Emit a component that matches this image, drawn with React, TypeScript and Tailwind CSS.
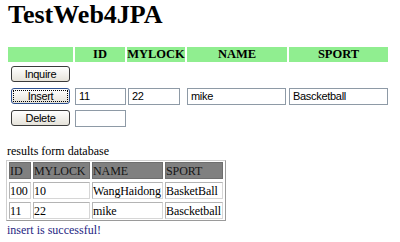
import React from 'react';

const headers = ['', 'ID', 'MYLOCK', 'NAME', 'SPORT'];

const results = [
  ['ID', 'MYLOCK', 'NAME', 'SPORT'],
  ['100', '10', 'WangHaidong', 'BasketBall'],
  ['11', '22', 'mike', 'Bascketball'],
];

function Button({ label, focused }: { label: string; focused?: boolean }) {
  return (
    <button
      type="button"
      className={`mx-[3px] h-[16px] w-[59px] rounded-[3px] border bg-gradient-to-b from-white to-[#e6e3da] font-['Liberation_Sans',Arial,sans-serif] text-[11px] leading-none text-black tracking-[-0.3px] ${
        focused ? 'border-[#2c4f8f] p-[1px]' : 'border-[#3a3a3a]'
      }`}
    >
      {focused ? (
        <span className="flex h-full w-full items-center justify-center border border-dotted border-black">{label}</span>
      ) : (
        label
      )}
    </button>
  );
}

function Field({ value, className }: { value: string; className: string }) {
  return (
    <input
      type="text"
      readOnly
      value={value}
      className={`h-[17px] border border-[#8e9aa6] bg-white px-[3px] font-['Liberation_Sans',Arial,sans-serif] text-[11px] text-black tracking-[-0.3px] outline-none ${className}`}
    />
  );
}

export default function App() {
  return (
    <div className="h-[242px] w-[400px] overflow-hidden bg-white font-['Liberation_Serif','Times_New_Roman',serif] text-black">
      <h1 className="pl-[8px] pt-[1px] text-[26px] font-bold leading-[28px]">TestWeb4JPA</h1>

      <div className="ml-[8px] mt-[18px] grid grid-cols-[65px_50px_58px_100px_99px] grid-rows-[15px_20px_20px_20px] gap-[2px]">
        {headers.map((h, i) => (
          <div key={i} className="flex items-center justify-center bg-[#90ee90] text-[12.5px] font-bold leading-none">
            {h}
          </div>
        ))}

        <div className="flex items-center">
          <Button label="Inquire" />
        </div>
        <div />
        <div />
        <div />
        <div />

        <div className="flex items-center">
          <Button label="Insert" focused />
        </div>
        <div className="flex items-center">
          <Field value="11" className="w-[51px]" />
        </div>
        <div className="flex items-center">
          <Field value="22" className="ml-px w-[52px]" />
        </div>
        <div className="flex items-center">
          <Field value="mike" className="w-[99px]" />
        </div>
        <div className="flex items-center">
          <Field value="Bascketball" className="w-[99px]" />
        </div>

        <div className="flex items-center">
          <Button label="Delete" />
        </div>
        <div className="flex items-center">
          <Field value="" className="w-[51px]" />
        </div>
        <div />
        <div />
        <div />
      </div>

      <div className="mt-[16px] pl-[7px] text-[12px] leading-[14px]">results form database</div>

      <div className="ml-[6px] mt-[2px] grid w-fit grid-cols-[22px_57px_71px_58px] grid-rows-[17px_17px_17px] gap-x-[2px] gap-y-[3px] border border-[#cfcfcf] border-b-[#9a9a9a] border-r-[#9a9a9a] px-[2px] py-[1px]">
        {results.map((row, r) =>
          row.map((cell, c) => (
            <div
              key={`${r}-${c}`}
              className={`flex items-center overflow-hidden whitespace-nowrap border text-[12px] leading-none tracking-[-0.1px] ${
                r === 0
                  ? 'border-[#6e6e6e] bg-[#808080] text-[#151515]'
                  : 'border-[#d6d6d6] border-l-[#b4b4b4] border-t-[#b4b4b4] bg-white'
              }`}
            >
              {cell}
            </div>
          ))
        )}
      </div>

      <div className="mt-[2px] pl-[7px] text-[12px] leading-[14px] text-[#1e1e82]">insert is successful!</div>
    </div>
  );
}
